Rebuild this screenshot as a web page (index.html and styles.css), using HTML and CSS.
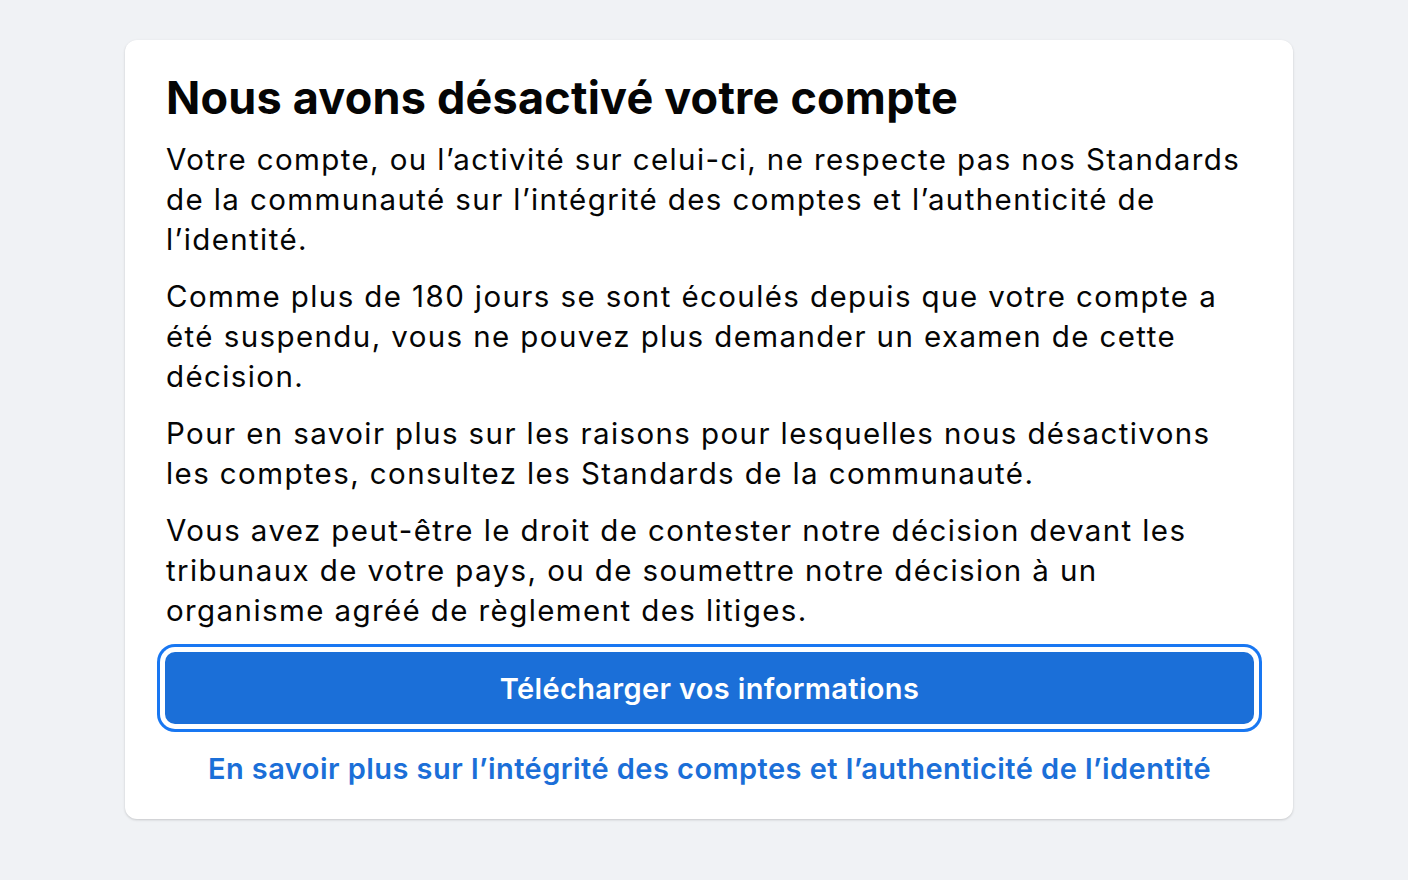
FILE: index.html
```html
<!DOCTYPE html>
<html lang="fr">
<head>
<meta charset="utf-8">
<title>Compte désactivé</title>
<link rel="stylesheet" href="styles.css">
</head>
<body>
<main class="page">
  <section class="card">
    <h1 class="title">Nous avons désactivé votre compte</h1>
    <p class="text">Votre compte, ou l’activité sur celui-ci, ne respecte pas nos Standards de la communauté sur l’intégrité des comptes et l’authenticité de l’identité.</p>
    <p class="text">Comme plus de 180 jours se sont écoulés depuis que votre compte a été suspendu, vous ne pouvez plus demander un examen de cette décision.</p>
    <p class="text">Pour en savoir plus sur les raisons pour lesquelles nous désactivons les comptes, consultez les Standards de la communauté.</p>
    <p class="text">Vous avez peut-être le droit de contester notre décision devant les tribunaux de votre pays, ou de soumettre notre décision à un organisme agréé de règlement des litiges.</p>
    <button class="primary" type="button">Télécharger vos informations</button>
    <a class="link" href="#">En savoir plus sur l’intégrité des comptes et l’authenticité de l’identité</a>
  </section>
</main>
</body>
</html>
```
FILE: styles.css
```css
* { box-sizing: border-box; }
html, body { margin: 0; padding: 0; }
body {
  background: #f0f2f5;
  font-family: Inter, "Noto Sans", "Liberation Sans", sans-serif;
  color: #050505;
  width: 1408px;
  height: 880px;
  overflow: hidden;
}
.page {
  padding: 40px 115px 0 125px;
}
.card {
  background: #fff;
  border-radius: 12px;
  box-shadow: 0 1px 3px rgba(0,0,0,0.12), 0 1px 2px rgba(0,0,0,0.06);
  padding: 30px 39px 30px 40px;
  display: flex;
  flex-direction: column;
}
.title {
  margin: 0 0 13px 1px;
  font-size: 45px;
  line-height: 56px;
  font-weight: 700;
  letter-spacing: 0.2px;
}
.text {
  margin: 0 0 17px 1px;
  font-size: 29.5px;
  line-height: 40px;
  font-weight: 400;
  letter-spacing: 1.4px;
}
.primary {
  margin: 5px 0 0;
  height: 72px;
  border: none;
  border-radius: 10px;
  background: #1b6fd8;
  color: #fff;
  font-family: inherit;
  font-size: 29px;
  font-weight: 600;
  letter-spacing: 0.35px;
  box-shadow: 0 0 0 5px #fff, 0 0 0 8px #1877f2;
}
.link {
  margin-top: 25px;
  text-align: center;
  color: #1b6fd8;
  text-decoration: none;
  font-size: 29px;
  line-height: 40px;
  font-weight: 600;
  letter-spacing: 0.45px;
}
```
